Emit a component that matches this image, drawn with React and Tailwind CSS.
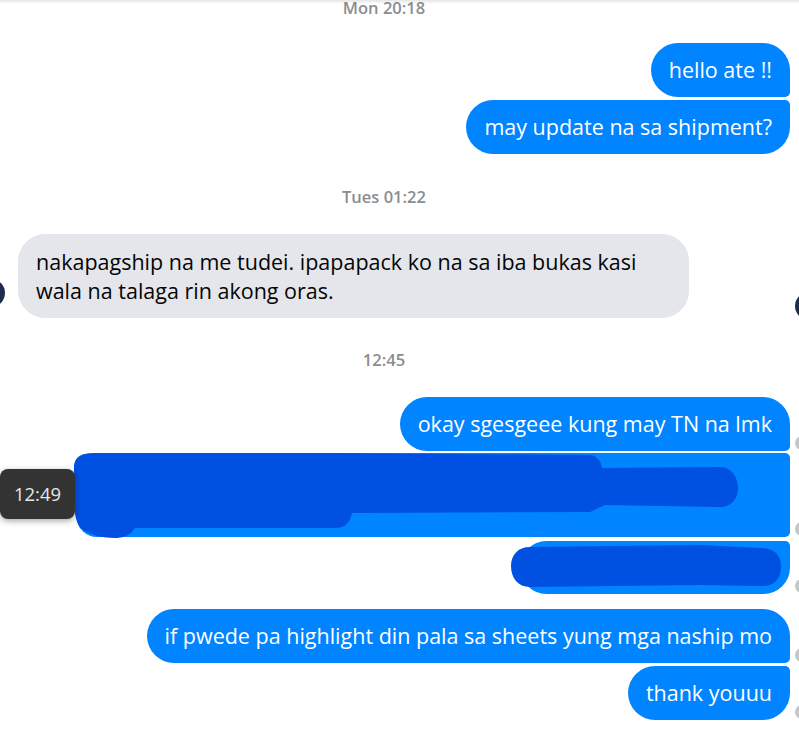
export default function App() {
  const BLUE = "#0084ff";
  const SCRIBBLE = "#0050e1";

  return (
    <div
      className="relative h-[730px] w-[799px] overflow-hidden bg-white"
      style={{ fontFamily: '"Open Sans", "Noto Sans", sans-serif' }}
    >
      {/* top shadow */}
      <div className="pointer-events-none absolute inset-x-0 top-0 h-[4px] bg-gradient-to-b from-black/10 to-transparent" />

      {/* avatars peeking at edges */}
      <div className="absolute left-[-23px] top-[279px] h-[28px] w-[28px] rounded-full bg-[#1f2d4d]" />
      <div className="absolute left-[795px] top-[292px] h-[28px] w-[28px] rounded-full bg-[#1f2d4d]" />

      <div className="flex flex-col">
        {/* Mon 20:18 */}
        <div className="mt-[-2px] h-[20px] pr-[31px] text-center text-[16.5px] font-semibold leading-[20px] text-[#8a8d91]">
          Mon 20:18
        </div>

        {/* outgoing group 1 */}
        <div className="mt-[25px] flex justify-end pr-[9px]">
          <div className="flex h-[54px] items-center rounded-l-[27px] rounded-tr-[27px] rounded-br-[5px] px-[18px] text-[21.5px] text-white" style={{ backgroundColor: BLUE }}>
            hello ate !!
          </div>
        </div>
        <div className="mt-[3px] flex justify-end pr-[9px]">
          <div className="flex h-[54px] items-center rounded-l-[27px] rounded-tr-[5px] rounded-br-[27px] px-[18px] text-[21.5px] text-white" style={{ backgroundColor: BLUE }}>
            may update na sa shipment?
          </div>
        </div>

        {/* Tues 01:22 */}
        <div className="mt-[33px] h-[20px] pr-[31px] text-center text-[16.5px] font-semibold leading-[20px] text-[#8a8d91]">
          Tues 01:22
        </div>

        {/* incoming */}
        <div className="mt-[27px] flex pl-[18px]">
          <div className="w-[671px] rounded-[27px] bg-[#e4e6eb] px-[18px] py-[13px] text-[21.5px] leading-[29px] text-[#050505]">
            nakapagship na me tudei. ipapapack ko na sa iba bukas kasi
            <br />
            wala na talaga rin akong oras.
          </div>
        </div>

        {/* 12:45 */}
        <div className="mt-[32px] h-[20px] pr-[31px] text-center text-[16.5px] font-semibold leading-[20px] text-[#8a8d91]">
          12:45
        </div>

        {/* outgoing group 2 */}
        <div className="mt-[27px] flex items-end justify-end">
          <div className="flex h-[54px] items-center rounded-l-[27px] rounded-tr-[27px] rounded-br-[5px] px-[18px] text-[21.5px] text-white" style={{ backgroundColor: BLUE }}>
            okay sgesgeee kung may TN na lmk
          </div>
          <Receipt />
        </div>

        <div className="relative mt-[2px] flex items-end justify-end">
          <div className="h-[84px] w-[713px] rounded-l-[20px] rounded-r-[5px]" style={{ backgroundColor: BLUE }} />
          <Receipt />
          <svg className="absolute left-[74px] top-0 h-[90px] w-[670px]" viewBox="74 453 670 90">
            <path
              fill={SCRIBBLE}
              d="M 74 468 C 74 456 82 453 95 453 L 330 453 L 590 455 C 598 456 601 462 602 468 L 720 467 C 732 467 738 478 738 488 C 738 500 730 508 718 507 L 605 505 L 590 512 L 352 513 C 350 522 346 528 335 528 L 135 528 C 130 536 122 538 115 538 C 100 538 88 534 80 528 C 75 520 74 510 74 500 Z"
            />
          </svg>
          {/* hover time tooltip */}
          <div className="absolute left-0 top-[16px] flex h-[50px] w-[75px] items-center justify-center rounded-[8px] bg-[#333333] text-[18.5px] text-[#e4e6eb] shadow-[0_2px_6px_rgba(0,0,0,0.35)]">
            12:49
          </div>
        </div>

        <div className="relative mt-[4px] flex items-end justify-end">
          <div className="h-[53px] w-[270px] rounded-l-[27px] rounded-tr-[5px] rounded-br-[27px]" style={{ backgroundColor: BLUE }} />
          <Receipt />
          <svg className="absolute left-[509px] top-0 h-[60px] w-[280px]" viewBox="509 541 280 60">
            <path
              fill={SCRIBBLE}
              d="M 530 547 L 700 545 L 760 548 C 775 548 781 556 781 566 C 781 580 773 587 760 586 L 700 585 L 530 587 C 518 587 511 578 511 566 C 511 555 518 547 530 547 Z"
            />
          </svg>
        </div>

        {/* outgoing group 3 */}
        <div className="mt-[15px] flex items-end justify-end">
          <div className="flex h-[54px] items-center rounded-l-[27px] rounded-tr-[27px] rounded-br-[5px] px-[18px] text-[21.5px] text-white" style={{ backgroundColor: BLUE }}>
            if pwede pa highlight din pala sa sheets yung mga naship mo
          </div>
          <Receipt />
        </div>
        <div className="mt-[3px] flex items-end justify-end">
          <div className="flex h-[54px] items-center rounded-l-[27px] rounded-tr-[5px] rounded-br-[27px] px-[18px] text-[21.5px] text-white" style={{ backgroundColor: BLUE }}>
            thank youuu
          </div>
          <Receipt />
        </div>
      </div>
    </div>
  );
}

function Receipt() {
  return <div className="mb-[1px] ml-[5px] mr-[-10px] h-[14px] w-[14px] shrink-0 rounded-full bg-[#c4c6c9]" />;
}
